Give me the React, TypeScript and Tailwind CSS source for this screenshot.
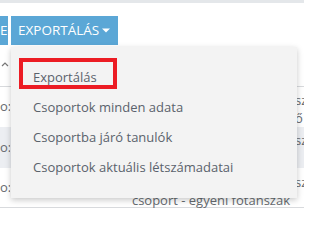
import React from "react";

const menuItems = [
  "Exportálás",
  "Csoportok minden adata",
  "Csoportba járó tanulók",
  "Csoportok aktuális létszámadatai",
];

function Caret() {
  return (
    <svg width="8" height="5" viewBox="0 0 8 5" className="shrink-0">
      <path d="M0 0.5h8L4 4.5z" fill="currentColor" />
    </svg>
  );
}

export default function App() {
  return (
    <div className="relative w-[304px] h-[211px] overflow-hidden bg-white font-['Open_Sans',sans-serif] text-[13px] text-[#666b70]">
      <div className="h-[3px] bg-[#e4e7ea]" />

      {/* Toolbar */}
      <div className="mt-[13px] flex gap-[3px]">
        <div className="w-[8px] h-[29px] bg-[#5ba7d6] text-white text-[13.5px] leading-[29px] overflow-hidden">
          E
        </div>
        <div className="w-[107px] h-[29px] bg-[#5ba7d6] text-white flex items-center gap-[3px] pl-[7px]">
          <span className="text-[13.5px]">EXPORTÁLÁS</span>
          <Caret />
        </div>
      </div>

      {/* Table behind the menu */}
      <div className="h-[42px] border-b border-[#d8dadd] flex items-center">
        <svg width="8" height="6" viewBox="0 0 8 6" className="ml-[1px] -mt-[4px] text-[#777]">
          <path d="M1 5L4 2l3 3" fill="none" stroke="currentColor" strokeWidth="1.2" />
        </svg>
      </div>
      <div className="h-[40px] flex">
        <div className="w-[10px] flex items-center overflow-hidden">o:</div>
        <div className="flex-1" />
        <div className="w-[9px] pt-[4px] leading-[18px] overflow-hidden whitespace-nowrap">
          <div>sz</div>
          <div>ő</div>
        </div>
      </div>
      <div className="h-[41px] flex bg-[#eceef2]">
        <div className="w-[10px] flex items-center overflow-hidden">o:</div>
        <div className="flex-1" />
        <div className="w-[9px] pt-[4px] leading-[18px] overflow-hidden whitespace-nowrap">sz</div>
      </div>
      <div className="h-[40px] flex border-b border-[#d8dadd]">
        <div className="w-[10px] flex items-center overflow-hidden">o:</div>
        <div className="flex-1 flex flex-col justify-end items-end pr-[5px] leading-[14px]">
          <span>csoport - egyéni fotanszak</span>
        </div>
        <div className="w-[9px] pt-[5px] leading-[18px] overflow-hidden whitespace-nowrap">sz</div>
      </div>

      {/* Dropdown menu */}
      <div className="absolute left-[11px] top-[47px] w-[286px] h-[151px] bg-[#f3f3f3] shadow-[0_2px_6px_rgba(0,0,0,0.22)] pt-[16px]">
        {menuItems.map((item) => (
          <div key={item} className="h-[30px] flex items-center pl-[22px] text-[#5a626c]">
            {item}
          </div>
        ))}
      </div>

      {/* Highlight */}
      <div className="absolute left-[19px] top-[58px] w-[98px] h-[31px] border-[4px] border-[#ec1c24]" />
    </div>
  );
}
